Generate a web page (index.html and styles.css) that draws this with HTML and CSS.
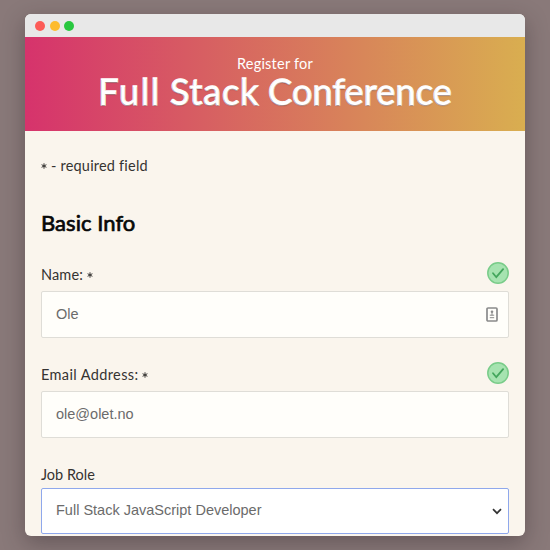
FILE: index.html
```
<!DOCTYPE html>
<html lang="en">
<head>
<meta charset="utf-8">
<title>Full Stack Conference</title>
<link rel="stylesheet" href="styles.css">
</head>
<body>
<main class="window">
  <div class="titlebar"><i class="dot red"></i><i class="dot yellow"></i><i class="dot green"></i></div>
  <header class="banner">
    <span class="kicker">Register for</span>
    <h1><span class="w1">Full</span> <span class="w2">Stack</span> <span class="w3">Conference</span></h1>
  </header>
  <form class="form">
    <p class="note"><svg class="star" viewBox="0 0 6 6"><path d="M3 .3v5.4M.6 1.7l4.8 2.6M.6 4.3l4.8-2.6"/></svg><span class="required">- required field</span></p>
    <h2>Basic Info</h2>
    <div class="label"><span class="name">Name:</span><svg class="star" viewBox="0 0 6 6"><path d="M3 .3v5.4M.6 1.7l4.8 2.6M.6 4.3l4.8-2.6"/></svg>
      <svg class="check" viewBox="0 0 22 22"><circle cx="11" cy="11" r="10.2"/><path d="M6 11.2l3.3 4 6.8-8.1"/></svg></div>
    <div class="field"><span>Ole</span>
      <svg class="card" viewBox="0 0 12 15"><rect x="1" y="1" width="10" height="13" rx="1"/><circle cx="6" cy="4.8" r="1.3"/><path d="M6 5.5v3M3.8 8.2h4.4M3.8 10.7h4.4"/></svg></div>
    <div class="label"><span class="email">Email Address:</span><svg class="star" viewBox="0 0 6 6"><path d="M3 .3v5.4M.6 1.7l4.8 2.6M.6 4.3l4.8-2.6"/></svg>
      <svg class="check" viewBox="0 0 22 22"><circle cx="11" cy="11" r="10.2"/><path d="M6 11.2l3.3 4 6.8-8.1"/></svg></div>
    <div class="field"><span>ole@olet.no</span></div>
    <div class="label job-label"><span class="job">Job Role</span></div>
    <div class="field select"><span>Full Stack JavaScript Developer</span>
      <svg class="chevron" viewBox="0 0 10 7"><path d="M1 1.2l4 4 4-4"/></svg></div>
  </form>
</main>
</body>
</html>
```
FILE: styles.css
```
* { box-sizing: border-box; }
body {
  margin: 0;
  height: 550px;
  padding: 14px 25px;
  overflow: hidden;
  background: #897979;
  font-family: Lato, "Open Sans", sans-serif;
  color: #353331;
}
.window {
  height: 522px;
  border-radius: 6px;
  overflow: hidden;
  background: #faf5ed;
  box-shadow: 0 7px 22px rgba(45, 35, 40, .38);
}
.titlebar {
  height: 23px;
  padding-left: 10px;
  display: flex;
  align-items: center;
  gap: 4.5px;
  padding-top: 1px;
  background: #e8e8e8;
}
.dot { width: 10px; height: 10px; border-radius: 50%; }
.red { background: #fc5b57; }
.yellow { background: #fdbb2d; }
.green { background: #28c73f; }
.banner {
  height: 94px;
  padding-top: 17px;
  display: flex;
  flex-direction: column;
  align-items: center;
  color: #fff;
  background: linear-gradient(90deg, #d6336c, #d9ae50);
}
.kicker { font-size: 14.5px; line-height: 19px; letter-spacing: .23px; }
h1 {
  margin: 0;
  display: flex;
  gap: 9px;
  font-size: 36px;
  line-height: 37px;
  font-weight: 400;
  white-space: nowrap;
  -webkit-text-stroke: 1.4px #fff;
  stroke-linejoin: round;
  paint-order: stroke fill;
  text-shadow: 0 1px 1px rgba(60, 20, 20, .45);
}
.w1 { letter-spacing: 1.7px; }
.w2 { letter-spacing: .8px; }
.w3 { letter-spacing: .15px; }
.form { padding: 24px 16px 0; }
.note {
  margin: 0;
  height: 20px;
  display: flex;
  align-items: center;
  gap: 4px;
  font-size: 14.5px;
}
.required { letter-spacing: .2px; }
.name { letter-spacing: .15px; }
.email { letter-spacing: .38px; }
.star {
  width: 6px;
  height: 6px;
  margin-top: 2px;
  fill: none;
  stroke: #353331;
  stroke-width: 1;
}
h2 {
  margin: 32px 0 0;
  height: 32px;
  font-size: 22px;
  line-height: 32px;
  font-weight: 400;
  letter-spacing: .05px;
  -webkit-text-stroke: .7px #080808;
  color: #080808;
}
.label {
  display: flex;
  align-items: center;
  gap: 4px;
  height: 22px;
  margin-top: 23px;
  font-size: 14.5px;
}
.label span { padding-top: 2px; }
.label .star { margin-top: 4px; }
.check { width: 22px; height: 22px; margin-left: auto; }
.check circle { fill: #a6e3b0; stroke: #79cc89; stroke-width: 1.5; }
.check path { fill: none; stroke: #43a65c; stroke-width: 1.8; stroke-linecap: round; }
.field {
  height: 47px;
  margin-top: 7px;
  padding: 0 10px 0 14px;
  display: flex;
  align-items: center;
  justify-content: space-between;
  border: 1px solid #dfddd7;
  border-radius: 2px;
  background: #fffefa;
  font: 14.5px "Liberation Sans", sans-serif;
  color: #6b6b6b;
}
.field span { padding-bottom: 2px; }
.field + .label { margin-top: 24px; }
.card { width: 12px; height: 15px; fill: none; stroke: #8b8b8b; stroke-width: 1.7; }
.card circle { fill: #8b8b8b; stroke: none; }
.card path { stroke-width: 1; }
.field + .job-label { margin-top: 24px; }
.select { height: 46px; margin-top: 4px; padding-right: 6px; border: 1.5px solid #8fa8ec; background: #fff; }
.chevron { width: 10px; height: 7px; fill: none; stroke: #333; stroke-width: 1.7; }
```
